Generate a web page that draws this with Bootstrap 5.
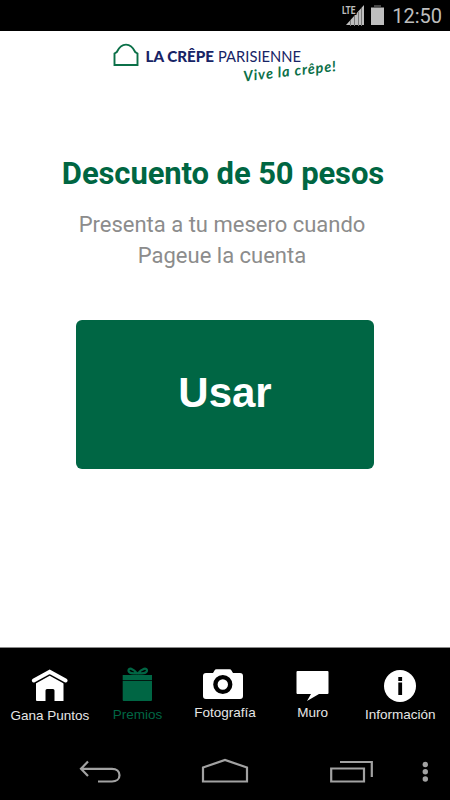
<!DOCTYPE html>
<html lang="es">
<head>
<meta charset="utf-8">
<meta name="viewport" content="width=device-width, initial-scale=1">
<title>La Crêpe Parisienne</title>
<link href="https://cdn.jsdelivr.net/npm/bootstrap@5.3.0/dist/css/bootstrap.min.css" rel="stylesheet">
<style>
  body { font-family: Roboto, sans-serif; overflow: hidden; }
  svg { display: block; flex: none; }
  .statusbar { height: 31px; color: #bebebe; padding-right: 8px; padding-top: 2px; }
  .clock { font-size: 20px; line-height: 29px; margin-left: 8px; letter-spacing: 0; }
  .brand { height: 59px; }
  .promo-title { color: #006642; font-size: 31px; line-height: 36px; font-weight: 700; letter-spacing: -.1px; margin: 66px 4px 0 0; }
  .promo-text { color: #8c8c8c; font-size: 22px; line-height: 31px; margin: 17px 6px 0 0; }
  .btn-use, .btn-use:hover { width: 298px; height: 149px; margin-top: 49px; padding: 0 0 4px; border: 0; border-radius: 6px; background: #006644; color: #fff; font: 700 42px/1 "Liberation Sans", sans-serif; }
  .tabs { height: 97px; border-top: 1px solid #8a8a8a; padding: 8px 6px 0; font-family: "Liberation Sans", sans-serif; color: #e6e6e6; }
  .tab-label { font-size: 13.5px; line-height: 20px; white-space: nowrap; }
  .tab-on { color: #006644; }
  .l-gana { margin-top: 2px; }
  .l-one { margin-top: 1px; }
  .l-three { margin-top: -1px; }
  .sysbar { height: 56px; }
</style>
<script src="https://cdn.jsdelivr.net/npm/bootstrap@5.3.0/dist/js/bootstrap.bundle.min.js"></script>
</head>
<body class="bg-white">
<div class="d-flex flex-column vh-100">
  <header class="statusbar bg-black d-flex justify-content-end align-items-center">
    <svg width="42" height="29" viewBox="343 2 42 29">
      <path d="M365 5v20h-18z" fill="#bebebe"/>
      <path d="M351.500 20v6M355.500 16v10M359.500 12v14M362.500 8v18" stroke="#777" stroke-width="1"/>
      <path d="M341 3h16.500v12H341z" fill="#000"/>
      <text x="343" y="14" font-size="11.500" font-weight="700" textLength="13.500" lengthAdjust="spacingAndGlyphs" fill="#bebebe">LTE</text>
      <path d="M372 7.500h13V25h-13z" fill="#bebebe"/><path d="M375 5h7v2h-7z" fill="#444"/>
    </svg>
    <span class="clock">12:50</span>
  </header>

  <main class="flex-grow-1 d-flex flex-column align-items-center text-center">
    <svg class="brand" width="250" height="59" viewBox="100 31 250 59">
      <path d="M114.500 65V53.500L116.800 52C119 47.300 122 44.600 126 44.600S133 47.300 135.200 52L137.500 53.500V65Z" fill="none" stroke="#0b7048" stroke-width="1.900"/>
      <g fill="#172466" font-family="Lato, sans-serif">
        <text x="145.500" y="61.500" font-size="15.500" font-weight="900" textLength="68.500" lengthAdjust="spacingAndGlyphs">LA CRÊPE</text>
        <text x="218" y="61.500" font-size="15.500" textLength="83" lengthAdjust="spacingAndGlyphs">PARISIENNE</text>
      </g>
      <text transform="translate(244 81.500) rotate(-6.500)" font-family="Lato, sans-serif" font-style="italic" font-weight="700" font-size="14.500" fill="#0b7048" textLength="93">Vive la crêpe!</text>
    </svg>
    <h1 class="promo-title">Descuento de 50 pesos</h1>
    <p class="promo-text mb-0">Presenta a tu mesero cuando<br>Pageue la cuenta</p>
    <button type="button" class="btn btn-use">Usar</button>
  </main>

  <nav class="tabs bg-black">
    <div class="row row-cols-5 g-0">
      <div class="col d-flex flex-column align-items-center">
        <svg width="60" height="48" viewBox="20 656 60 48">
          <path d="M36 682.500L49.700 674L63.500 682.500V701H54.500V690.500Q54.500 689 53 689H47Q45.500 689 45.500 690.500V701H37Q36 701 36 700Z" fill="#fff"/>
          <path d="M34 683.500L49.700 674.800L65.500 683.500" fill="none" stroke="#000" stroke-width="1.600"/>
          <path d="M33.800 680.500L49.700 671.800L65.600 680.500" fill="none" stroke="#fff" stroke-width="4" stroke-linecap="round"/>
        </svg>
        <span class="tab-label l-gana">Gana Puntos</span>
      </div>
      <div class="col d-flex flex-column align-items-center tab-on">
        <svg width="60" height="48" viewBox="107 656 60 48" fill="#006644">
          <path d="M137.500 674C133 668 128.500 667.500 128.500 670.500S133 673.500 137.500 673.500M137.500 674C142 668 147 667.500 147 670.500S142 673.500 137.500 673.500" fill="none" stroke="#006644" stroke-width="2.200"/>
          <path d="M122.700 675h29.300v5h-29.300zM122.700 680.700h29.300v19.300q0 1-1 1h-27.300q-1 0-1-1z"/>
        </svg>
        <span class="tab-label l-one">Premios</span>
      </div>
      <div class="col d-flex flex-column align-items-center">
        <svg width="60" height="48" viewBox="195 656 60 48">
          <path d="M206 673h7l1.500-2.500q.5-1.300 2-1.300h13q1.500 0 2 1.300l1.500 2.500h7q3 0 3 3v20q0 3-3 3h-34q-3 0-3-3v-20q0-3 3-3z" fill="#fff"/>
          <circle cx="222.800" cy="684.500" r="7.400" fill="#fff" stroke="#000" stroke-width="4.400"/>
        </svg>
        <span class="tab-label l-three">Fotografía</span>
      </div>
      <div class="col d-flex flex-column align-items-center">
        <svg width="60" height="48" viewBox="282.500 656 60 48">
          <path d="M297 671h30q1 0 1 1v21q0 1-1 1h-8.500L306.500 701L310.500 694H297q-1 0-1-1v-21q0-1 1-1z" fill="#fff"/>
        </svg>
        <span class="tab-label l-three">Muro</span>
      </div>
      <div class="col d-flex flex-column align-items-center">
        <svg width="60" height="48" viewBox="370 656 60 48">
          <circle cx="400" cy="686" r="16" fill="#fff"/>
          <path d="M398.300 677h3.800v4h-3.800zM398.300 682.500h3.800V695h-3.800z"/>
        </svg>
        <span class="tab-label l-one">Información</span>
      </div>
    </div>
  </nav>

  <footer class="sysbar bg-black">
    <svg width="450" height="56" viewBox="0 744 450 56" fill="none" stroke="#a2a2a2" stroke-width="2.200">
      <path d="M88 761.500L81 768.800L88 776M81 768.800H112C116.500 768.800 119.500 771.500 119.500 775.200S116.500 781.500 112 781.500H98"/>
      <path d="M203 781.500V767.500L225 760L247 767.500V781.500Z"/>
      <path d="M331.200 768.500H364V781.500H331.200ZM340 762H371.800V777"/>
      <g fill="#a2a2a2" stroke="none"><circle cx="425.300" cy="764.500" r="2.700"/><circle cx="425.300" cy="771.700" r="2.700"/><circle cx="425.300" cy="779" r="2.700"/></g>
    </svg>
  </footer>
</div>
</body>
</html>
